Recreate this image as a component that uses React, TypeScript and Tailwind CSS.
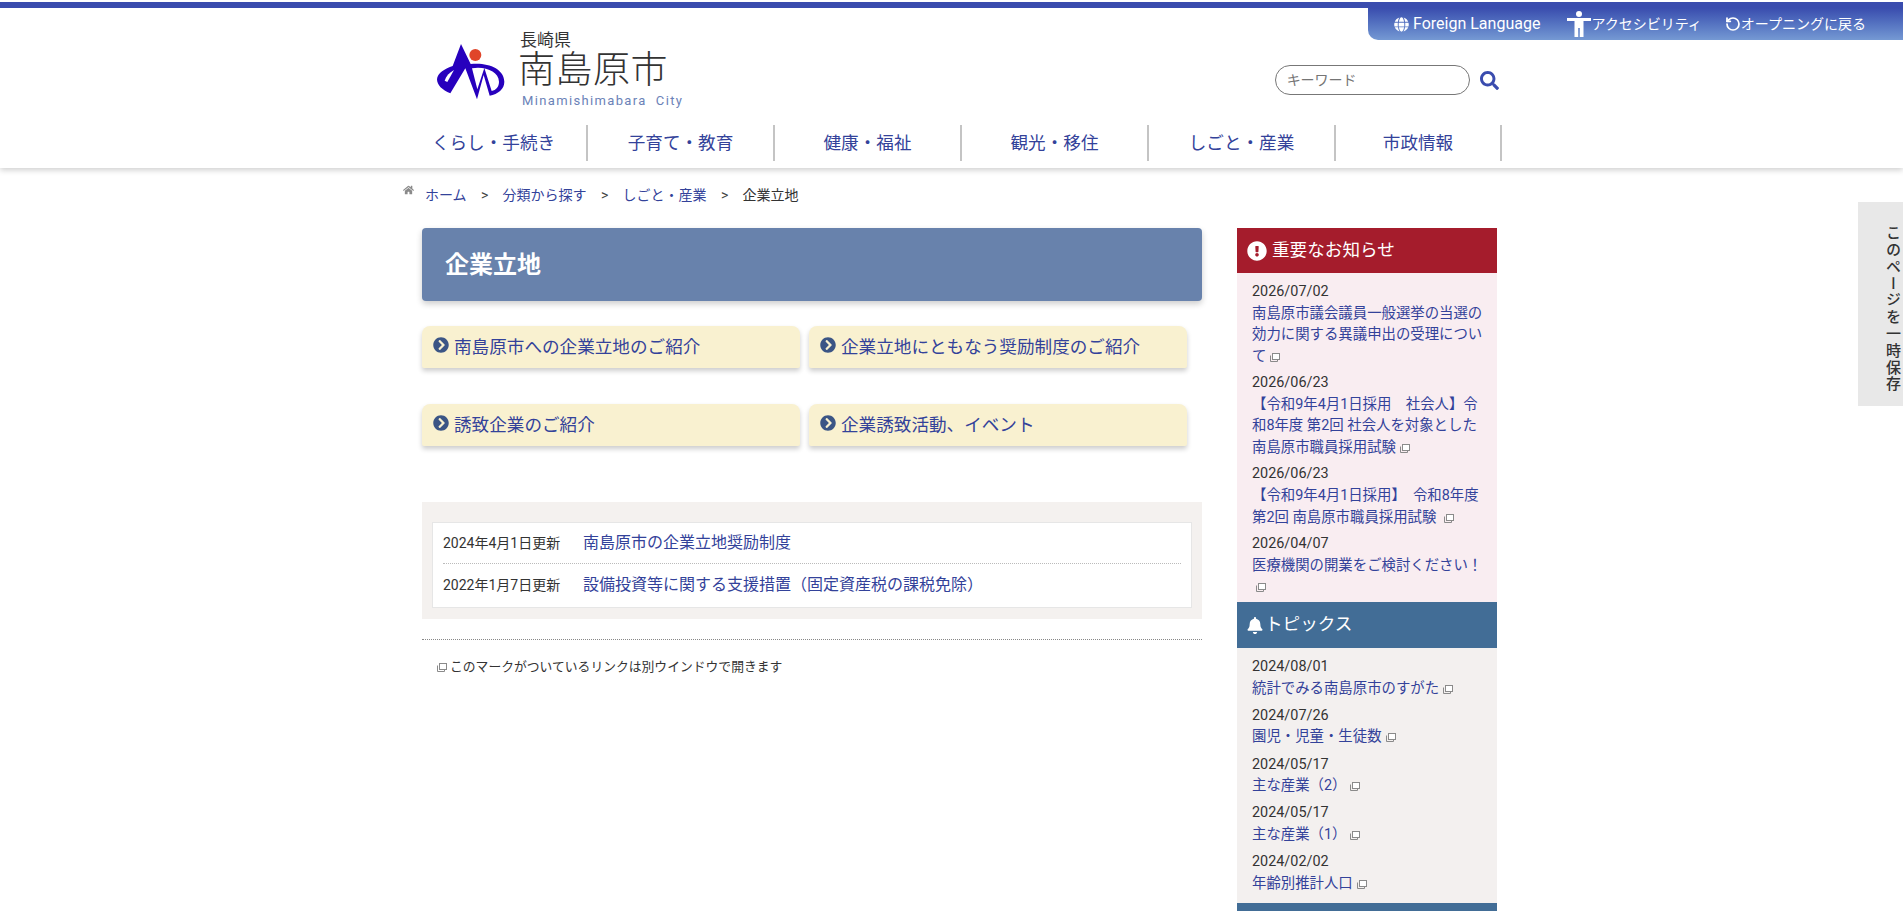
import React from "react";
import { FaGlobe, FaSearch, FaBell, FaExclamationCircle, FaChevronCircleRight, FaHome } from "react-icons/fa";
import { RotateCcw } from "lucide-react";

function Ext() {
  return (
    <svg viewBox="0 0 10 9" className="inline-block w-[10px] h-[9px] ml-[4px] align-[-1px]">
      <rect x="2.5" y="0.5" width="7" height="6" fill="#ffffff" stroke="#8a8a8a" />
      <path d="M0.5 2.5V8.5H7.5V6.5" fill="none" stroke="#8a8a8a" />
    </svg>
  );
}

function Logo() {
  return (
    <svg viewBox="0 0 228 186" className="w-[76px] h-[62px] shrink-0">
      <path
        d="M87 12L116 72C165 66 217 85 217 125C217 148 198 162 173 167L155 105L135 178L100 85L55 160C30 150 15 135 15 118C15 100 40 85 62 78Z"
        fill="#2700bd"
      />
      <path d="M120 85C160 78 200 95 201 125C201 140 192 150 179 153L157 84L136 148Z" fill="#ffffff" />
      <path d="M38 122C42 108 52 98 66 90L46 126Z" fill="#ffffff" />
      <circle cx="130" cy="45" r="18" fill="#e0452a" />
    </svg>
  );
}

function Person() {
  return (
    <svg viewBox="0 0 24 26" className="w-[24px] h-[26px]" fill="#ffffff">
      <circle cx="12" cy="3" r="3" />
      <path d="M0 7H24V10H16.5V26H12.8V17H11.2V26H7.5V10H0Z" />
    </svg>
  );
}

const navItems = [
  ["くらし・手続き", "w-[187px] border-r-2"],
  ["子育て・教育", "w-[187px] border-r-2"],
  ["健康・福祉", "w-[187px] border-r-2"],
  ["観光・移住", "w-[187px] border-r-2"],
  ["しごと・産業", "w-[187px] border-r-2"],
  ["市政情報", "w-[166px] border-r-2"],
];

const cards = ["南島原市への企業立地のご紹介", "企業立地にともなう奨励制度のご紹介", "誘致企業のご紹介", "企業誘致活動、イベント"];

const notices: [string, string, string?][] = [
  ["2026/07/02", "南島原市議会議員一般選挙の当選の効力に関する異議申出の受理について"],
  ["2026/06/23", "【令和9年4月1日採用　社会人】令和8年度 第2回 社会人を対象とした南島原市職員採用試験"],
  ["2026/06/23", "【令和9年4月1日採用】　令和8年度 第2回 南島原市職員採用試験 "],
  ["2026/04/07", "医療機関の開業をご検討ください！ "],
];

const topics = [
  ["2024/08/01", "統計でみる南島原市のすがた"],
  ["2024/07/26", "園児・児童・生徒数"],
  ["2024/05/17", "主な産業（2）"],
  ["2024/05/17", "主な産業（1）"],
  ["2024/02/02", "年齢別推計人口"],
];

function Item({ date, text, mb }: { date: string; text: string; mb: string }) {
  return (
    <li className={mb}>
      <div className="text-[#333333]">{date}</div>
      <a className="text-[#33429a]">
        {text}
        <Ext />
      </a>
    </li>
  );
}

export default function App() {
  return (
    <div className="relative h-[911px] overflow-hidden bg-white [font-family:Roboto,'Noto_Sans_CJK_JP',sans-serif]">
      <header className="pt-[2px] bg-white shadow-[0_2px_6px_rgba(0,0,0,0.2)]">
        <div className="h-[6px] bg-[#3a4cae]" />
        <div className="flex h-[117px] pl-[432px]">
          <div className="pt-[32px]">
            <Logo />
          </div>
          <div className="ml-[10px] pt-[22px] w-[761px] text-[#333333]">
            <div className="h-[20px] text-[17px] leading-[20px] pl-[2px]">長崎県</div>
            <div className="h-[42px] text-[37px] leading-[42px] font-light tracking-[0.5px]">南島原市</div>
            <div className="h-[18px] text-[13px] leading-[18px] pl-[4px] tracking-[1.35px] whitespace-pre text-[#6b82b8]">Minamishimabara  City</div>
          </div>
          <div className="w-[632px] flex flex-col items-end">
            <div className="w-[535px] h-[32px] rounded-bl-[10px] bg-gradient-to-b from-[#3a4cae] to-[#7599d3] text-white flex items-center text-[14px] pl-[26px]">
              <FaGlobe className="w-[15px] h-[15px]" />
              <span className="ml-[4px] text-[16px]">Foreign Language</span>
              <span className="ml-[27px]"><Person /></span>
              <span>アクセシビリティ</span>
              <RotateCcw className="ml-[23px] w-[16px] h-[16px]" strokeWidth={2.6} />
              <span>オープニングに戻る</span>
            </div>
            <div className="w-full mt-[25px] flex items-center">
              <div className="w-[195px] h-[30px] rounded-full border border-[#777777] pl-[11px] text-[14px] leading-[28px] text-[#757575]">キーワード</div>
              <FaSearch className="ml-[10px] w-[19px] h-[19px] text-[#3a4cae]" />
            </div>
          </div>
        </div>
        <nav className="flex h-[43px] pb-[7px] pl-[401px] text-[17.6px] text-[#33429a]">
          {navItems.map(([t, c]) => (
            <a key={t} className={`${c} border-[#c4c4c4] flex items-center justify-center`}>{t}</a>
          ))}
        </nav>
      </header>

      <div className="flex h-[60px] pl-[403px] pt-[17px] text-[14px] leading-[20px] text-[#33429a]">
        <FaHome className="w-[11px] h-[12px] mt-[-1px] text-[#8a8a8a]" />
        <a className="ml-[11px]">ホーム</a>
        <span className="mx-[12px] w-[12px] text-[#444444] text-center">&gt;</span>
        <a>分類から探す</a>
        <span className="mx-[12px] w-[12px] text-[#444444] text-center">&gt;</span>
        <a>しごと・産業</a>
        <span className="mx-[12px] w-[12px] text-[#444444] text-center">&gt;</span>
        <span className="text-[#333333]">企業立地</span>
      </div>

      <main className="flex pl-[422px] gap-[35px]">
        <div className="w-[780px]">
          <h1 className="h-[73px] rounded-[4px] bg-[#6882ac] shadow-[0_3px_6px_rgba(0,0,0,0.2)] pl-[23px] flex items-center text-[24px] font-bold text-white">企業立地</h1>
          <div className="mt-[25px] grid grid-cols-[378px_378px] gap-x-[9px] gap-y-[36px]">
            {cards.map((c) => (
              <a key={c} className="h-[42px] rounded-t-[8px] rounded-b-[2px] bg-[#f9f1d0] shadow-[0_3px_5px_rgba(0,0,0,0.2)] flex items-center pl-[11px] text-[17.6px] text-[#33429a]">
                <FaChevronCircleRight className="w-[16px] h-[16px] mt-[-4px] mr-[5px] text-[#3b5585]" />
                {c}
              </a>
            ))}
          </div>
          <section className="mt-[56px] bg-[#f4f1ef] px-[10px] pt-[20px] pb-[11px]">
            <div className="border border-[#e6e6e6] bg-white px-[10px] h-[86px]">
              <div className="h-[41px] flex items-center border-b border-dotted border-[#bbbbbb]">
                <span className="w-[140px] text-[14px] text-[#333333]">2024年4月1日更新</span>
                <a className="text-[16px] text-[#33429a]">南島原市の企業立地奨励制度</a>
              </div>
              <div className="h-[42px] flex items-center">
                <span className="w-[140px] text-[14px] text-[#333333]">2022年1月7日更新</span>
                <a className="text-[16px] text-[#33429a]">設備投資等に関する支援措置（固定資産税の課税免除）</a>
              </div>
            </div>
          </section>
          <div className="mt-[20px] border-b border-dotted border-[#888888]" />
          <p className="mt-[17px] pl-[15px] flex items-center text-[12.8px] leading-[20px] text-[#333333]">
            <svg viewBox="0 0 10 9" className="w-[10px] h-[9px] mr-[3px]">
              <rect x="2.5" y="0.5" width="7" height="6" fill="#ffffff" stroke="#8a8a8a" />
              <path d="M0.5 2.5V8.5H7.5V6.5" fill="none" stroke="#8a8a8a" />
            </svg>
            このマークがついているリンクは別ウインドウで開きます
          </p>
        </div>

        <aside className="w-[260px] text-[14.4px] leading-[21.6px]">
          <h2 className="h-[45px] bg-[#a51c2c] text-white flex items-center pl-[10px] text-[17.6px] font-normal">
            <FaExclamationCircle className="w-[20px] h-[20px] mr-[5px]" />
            重要なお知らせ
          </h2>
          <ul className="bg-[#f9edf1] pl-[15px] pr-[10px] pt-[8px] h-[329px]">
            {notices.map(([d, t], i) => (
              <Item key={i} date={d} text={t} mb="mb-[4.8px]" />
            ))}
          </ul>
          <h2 className="h-[46px] bg-[#426d96] text-white flex items-center pl-[10px] text-[17.6px] font-normal">
            <FaBell className="w-[16px] h-[17px] mr-[2px]" />
            トピックス
          </h2>
          <ul className="bg-[#f3f0ef] pl-[15px] pr-[10px] pt-[8px] h-[255px]">
            {topics.map(([d, t], i) => (
              <Item key={i} date={d} text={t} mb="mb-[5.6px]" />
            ))}
          </ul>
          <div className="h-[46px] bg-[#426d96]" />
        </aside>
      </main>

      <div className="absolute right-0 top-[202px] w-[45px] h-[204px] bg-[#e8e8e8] flex justify-center pt-[9px] pl-[4px] text-[15px] font-medium tracking-[1.8px] text-[#333333] [writing-mode:vertical-rl]">
        このページを一時保存
      </div>
    </div>
  );
}
